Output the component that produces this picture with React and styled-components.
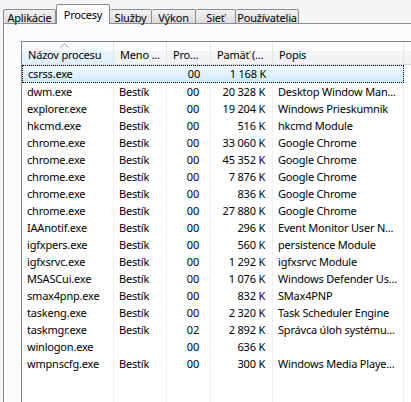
import React from 'react';
import styled, { createGlobalStyle } from 'styled-components';

const Global = createGlobalStyle`
  html, body { margin: 0; padding: 0; background: #f5f5f5; }
  body { font-family: "Noto Sans", "Open Sans", sans-serif; font-size: 11px; letter-spacing: -0.2px; color: #000; }
  #root { width: 411px; height: 402px; overflow: hidden; }
`;

const Window = styled.div`
  width: 411px;
  height: 402px;
  overflow: hidden;
  display: flex;
  flex-direction: column;
`;

const TabStrip = styled.div`
  display: flex;
  align-items: flex-end;
  height: 24px;
  padding-left: 3px;
  position: relative;
  z-index: 1;
  margin-bottom: -1px;
`;

const Tab = styled.div`
  box-sizing: border-box;
  width: ${p => p.$w}px;
  height: ${p => (p.$active ? 20 : 15)}px;
  border: 1px solid #898c95;
  border-left-width: ${p => (p.$first || p.$active ? 1 : 0)}px;
  border-bottom: ${p => (p.$active ? 'none' : '1px solid #898c95')};
  border-radius: 2px 2px 0 0;
  background: ${p => (p.$active ? '#fcfcfc' : 'linear-gradient(#f3f3f3, #e6e6e6 50%, #dcdcdc)')};
  display: flex;
  align-items: center;
  justify-content: center;
  padding-top: ${p => (p.$active ? 0 : 1)}px;
  line-height: 1;
  white-space: nowrap;
`;

const Panel = styled.div`
  flex: 1;
  width: 430px;
  box-sizing: border-box;
  margin-left: 3px;
  border-top: 1px solid #898c95;
  border-left: 1px solid #898c95;
  background: #fcfcfc;
  padding: 17px 0 0 17px;
  display: flex;
`;

const ListView = styled.div`
  flex: 1;
  border: 1px solid #828790;
  border-bottom: none;
  border-right: none;
  background: #fff;
  display: flex;
  flex-direction: column;
`;

const Header = styled.div`
  display: flex;
  height: 23px;
  background: linear-gradient(#ffffff, #ffffff 40%, #f3f4f6 41%, #f1f2f4);
  border-bottom: 1px solid #d5d5d5;
  box-sizing: border-box;
`;

const HeadCell = styled.div`
  box-sizing: border-box;
  width: ${p => p.$w}px;
  flex: ${p => (p.$fill ? 1 : 'none')};
  border-right: ${p => (p.$fill ? 'none' : '1px solid #e3e5e8')};
  padding-left: 6px;
  padding-top: 5px;
  white-space: nowrap;
  position: relative;
  background: ${p => (p.$sorted ? 'linear-gradient(#f7fcfe, #f7fcfe 40%, #e8f5fc 41%, #dcf0fb)' : 'transparent')};
`;

const SortArrow = styled.svg`
  position: absolute;
  left: 38px;
  top: 1px;
`;

const Body = styled.div`
  flex: 1;
  display: flex;
  flex-direction: column;
`;

const Row = styled.div`
  display: flex;
  height: 17px;
  box-sizing: border-box;
  ${p => p.$selected && `
    height: 18px;
    width: 382px;
    border: 1px dotted #000;
    background: linear-gradient(#f3faff, #e1f3fc 50%, #cfeafa);
  `}
`;

const FillRow = styled.div`
  display: flex;
  flex: 1;
`;

const Cell = styled.div`
  box-sizing: border-box;
  width: ${p => p.$w}px;
  flex: ${p => (p.$fill ? 1 : 'none')};
  border-right: ${p => (p.$fill || p.$noline ? 'none' : '1px solid #f0f0f0')};
  padding: ${p => (p.$right ? `0 ${p.$pr}px 0 0` : '0 0 0 5px')};
  text-align: ${p => (p.$right ? 'right' : 'left')};
  white-space: nowrap;
  overflow: hidden;
  line-height: ${p => (p.$sel ? 16 : 17)}px;
`;

const cols = [
  { w: 92, title: 'Názov procesu' },
  { w: 53, title: 'Meno ...' },
  { w: 44, title: 'Pro...', right: true, pr: 11 },
  { w: 62, title: 'Pamäť (...', right: true, pr: 7 },
  { w: 131, title: 'Popis' },
];

const rows = [
  ['csrss.exe', '', '00', '1 168 K', ''],
  ['dwm.exe', 'Bestík', '00', '20 328 K', 'Desktop Window Man...'],
  ['explorer.exe', 'Bestík', '00', '19 204 K', 'Windows Prieskumník'],
  ['hkcmd.exe', 'Bestík', '00', '516 K', 'hkcmd Module'],
  ['chrome.exe', 'Bestík', '00', '33 060 K', 'Google Chrome'],
  ['chrome.exe', 'Bestík', '00', '45 352 K', 'Google Chrome'],
  ['chrome.exe', 'Bestík', '00', '7 876 K', 'Google Chrome'],
  ['chrome.exe', 'Bestík', '00', '836 K', 'Google Chrome'],
  ['chrome.exe', 'Bestík', '00', '27 880 K', 'Google Chrome'],
  ['IAAnotif.exe', 'Bestík', '00', '296 K', 'Event Monitor User N...'],
  ['igfxpers.exe', 'Bestík', '00', '560 K', 'persistence Module'],
  ['igfxsrvc.exe', 'Bestík', '00', '1 292 K', 'igfxsrvc Module'],
  ['MSASCui.exe', 'Bestík', '00', '1 076 K', 'Windows Defender Us...'],
  ['smax4pnp.exe', 'Bestík', '00', '832 K', 'SMax4PNP'],
  ['taskeng.exe', 'Bestík', '00', '2 320 K', 'Task Scheduler Engine'],
  ['taskmgr.exe', 'Bestík', '02', '2 892 K', 'Správca úloh systému...'],
  ['winlogon.exe', '', '00', '636 K', ''],
  ['wmpnscfg.exe', 'Bestík', '00', '300 K', 'Windows Media Playe...'],
];

const tabs = [
  { t: 'Aplikácie', w: 53 },
  { t: 'Procesy', w: 54, active: true },
  { t: 'Služby', w: 42 },
  { t: 'Výkon', w: 44 },
  { t: 'Sieť', w: 40 },
  { t: 'Používatelia', w: 63 },
];

export default function App() {
  return (
    <Window>
      <Global />
      <TabStrip>
        {tabs.map((t, i) => (
          <Tab key={t.t} $w={t.w} $active={t.active} $first={i === 0}>{t.t}</Tab>
        ))}
      </TabStrip>
      <Panel>
        <ListView>
          <Header>
            {cols.map((c, i) => (
              <HeadCell key={c.title} $w={c.w} $sorted={i === 0}>
                {i === 0 && (
                  <SortArrow width="9" height="5" viewBox="0 0 9 5">
                    <path d="M0.5 4.5 L4.5 0.5 L8.5 4.5" fill="none" stroke="#97a5b4" strokeWidth="1" />
                  </SortArrow>
                )}
                {c.title}
              </HeadCell>
            ))}
            <HeadCell $fill />
          </Header>
          <Body>
            {rows.map((r, ri) => (
              <Row key={ri} $selected={ri === 0}>
                {cols.map((c, ci) => (
                  <Cell
                    key={ci}
                    $w={ri === 0 && ci === 0 ? c.w - 1 : c.w}
                    $right={c.right}
                    $pr={c.pr}
                    $noline={ri === 0}
                    $sel={ri === 0}
                  >
                    {r[ci]}
                  </Cell>
                ))}
                {ri !== 0 && <Cell $fill />}
              </Row>
            ))}
            <FillRow>
              {cols.map((c, ci) => (
                <Cell key={ci} $w={c.w} />
              ))}
              <Cell $fill />
            </FillRow>
          </Body>
        </ListView>
      </Panel>
    </Window>
  );
}
